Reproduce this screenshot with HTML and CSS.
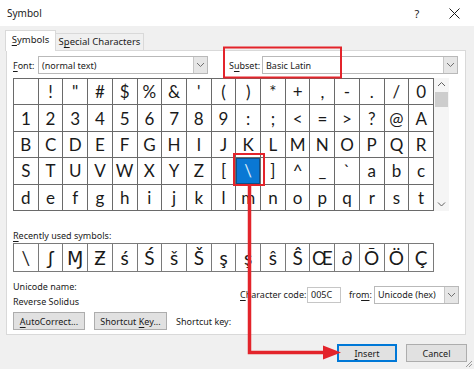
FILE: index.html
```html
<!DOCTYPE html>
<html lang="en">
<head>
    <meta charset="UTF-8">
    <title>Symbol</title>
    <link rel="stylesheet" href="styles.css">
</head>
<body>
    <div class="titlebar">
        <span class="title">Symbol</span>
        <span class="help">?</span>
        <span class="close">
            <svg width="11" height="11" viewBox="0 0 11 11"><path d="M0.5 0.5 L10.5 10.5 M10.5 0.5 L0.5 10.5" stroke="#1a1a1a" stroke-width="1"/></svg>
        </span>
    </div>

    <div class="tabs">
        <div class="tab active"><u>S</u>ymbols</div>
        <div class="tab">S<u>p</u>ecial Characters</div>
    </div>

    <div class="panel">
        <div class="select-row">
            <span class="lbl font-lbl"><u>F</u>ont:</span>
            <div class="combo font-combo">
                <span>(normal text)</span>
                <span class="drop"><svg width="9" height="6" viewBox="0 0 9 6"><path d="M1 1 L4.5 4.5 L8 1" fill="none" stroke="#707070"/></svg></span>
            </div>
            <span class="lbl subset-lbl">S<u>u</u>bset:</span>
            <div class="combo subset-combo">
                <span>Basic Latin</span>
                <span class="drop"><svg width="9" height="6" viewBox="0 0 9 6"><path d="M1 1 L4.5 4.5 L8 1" fill="none" stroke="#707070"/></svg></span>
            </div>
        </div>

        <div class="map-wrap">
            <div class="charmap">
                <span></span><span>!</span><span>&quot;</span><span>#</span><span>$</span><span>%</span><span>&amp;</span><span>'</span><span>(</span><span>)</span><span>*</span><span>+</span><span>,</span><span>-</span><span>.</span><span>/</span><span>0</span>
                <span>1</span><span>2</span><span>3</span><span>4</span><span>5</span><span>6</span><span>7</span><span>8</span><span>9</span><span>:</span><span>;</span><span>&lt;</span><span>=</span><span>&gt;</span><span>?</span><span>@</span><span>A</span>
                <span>B</span><span>C</span><span>D</span><span>E</span><span>F</span><span>G</span><span>H</span><span>I</span><span>J</span><span>K</span><span>L</span><span>M</span><span>N</span><span>O</span><span>P</span><span>Q</span><span>R</span>
                <span>S</span><span>T</span><span>U</span><span>V</span><span>W</span><span>X</span><span>Y</span><span>Z</span><span>[</span><span class="sel">\</span><span>]</span><span>^</span><span>_</span><span>`</span><span>a</span><span>b</span><span>c</span>
                <span>d</span><span>e</span><span>f</span><span>g</span><span>h</span><span>i</span><span>j</span><span>k</span><span>l</span><span>m</span><span>n</span><span>o</span><span>p</span><span>q</span><span>r</span><span>s</span><span>t</span>
            </div>
            <div class="scrollbar">
                <svg width="15" height="14" viewBox="0 0 15 14"><path d="M4 8 L7.5 4.5 L11 8" fill="none" stroke="#606060"/></svg>
                <div class="thumb"></div>
                <svg class="down" width="15" height="14" viewBox="0 0 15 14"><path d="M4 5.5 L7.5 9 L11 5.5" fill="none" stroke="#606060"/></svg>
            </div>
        </div>

        <div class="recent-lbl"><u>R</u>ecently used symbols:</div>
        <div class="recent">
            <span>\</span><span>ʃ</span><span>Ɱ</span><span>Ƶ</span><span>ś</span><span>Ś</span><span>š</span><span>Š</span><span>ş</span><span>ş</span><span>ŝ</span><span>Ŝ</span><span>Œ</span><span>∂</span><span>Ō</span><span>Ö</span><span>Ç</span>
        </div>

        <div class="info-row">
            <div class="names">
                <div>Unicode name:</div>
                <div>Reverse Solidus</div>
            </div>
            <div class="code">
                <span class="code-lbl"><u>C</u>haracter code:</span>
                <span class="code-input">005C</span>
                <span class="from-lbl">fro<u>m</u>:</span>
                <div class="combo from-combo">
                    <span>Unicode (hex)</span>
                    <span class="drop"><svg width="9" height="6" viewBox="0 0 9 6"><path d="M1 1 L4.5 4.5 L8 1" fill="none" stroke="#707070"/></svg></span>
                </div>
            </div>
        </div>

        <div class="btn-row">
            <button class="btn autocorrect"><u>A</u>utoCorrect...</button>
            <button class="btn shortcut">Shortcut <u>K</u>ey...</button>
            <span class="shortcut-lbl">Shortcut key:</span>
        </div>
    </div>

    <div class="footer">
        <button class="btn insert"><u>I</u>nsert</button>
        <button class="btn cancel">Cancel</button>
    </div>

    <!-- red callouts drawn over the dialog -->
    <svg class="callouts" width="474" height="369" viewBox="0 0 474 369">
        <rect x="224" y="47.5" width="117" height="30" fill="none" stroke="#e3242b" stroke-width="2"/>
        <rect x="234" y="154" width="30" height="31" fill="none" stroke="#e3242b" stroke-width="2"/>
        <path d="M249.5 185 L249.5 352.5 L326 352.5" fill="none" stroke="#e3242b" stroke-width="3.5"/>
        <polygon points="323,345.5 341,352.5 323,359.5" fill="#e3242b"/>
    </svg>

    <svg class="grip" width="8" height="8" viewBox="0 0 8 8">
        <path d="M7 1 L1 7 M7 4 L4 7" stroke="#9a9a9a" stroke-width="1"/>
    </svg>
</body>
</html>
```

FILE: styles.css
```css
* {
    box-sizing: border-box;
}

body {
    margin: 0;
    width: 474px;
    height: 369px;
    position: relative;
    overflow: hidden;
    background-color: #f0f0f0;
    font-family: "Noto Sans", "Open Sans", sans-serif;
    font-size: 9px;
    color: #1a1a1a;
    white-space: nowrap;
}

u {
    text-decoration-thickness: 1px;
    text-underline-offset: 2px;
}

.titlebar {
    height: 26px;
    background-color: #fff;
    display: flex;
    align-items: center;
    padding: 0 4px 0 7px;
}

.title {
    flex: 1;
    font-size: 10px;
}

.help,
.close {
    width: 32px;
    display: flex;
    justify-content: center;
    align-items: center;
    font-size: 11px;
}

.help {
    margin-right: 5px;
}

.tabs {
    display: flex;
    align-items: flex-end;
    height: 20px;
    margin: 4px 0 0 5px;
    position: relative;
    z-index: 1;
}

.tab {
    height: 17px;
    width: 88px;
    text-align: center;
    line-height: 16px;
    font-size: 9.5px;
    background-color: #f0f0f0;
    border: 1px solid #d9d9d9;
    border-bottom: none;
}

.tab + .tab {
    border-left: none;
}

.tab.active {
    width: 51px;
    height: 21px;
    margin-bottom: -1px;
    line-height: 18px;
    background-color: #fff;
}

.panel {
    margin: 0 8px 0 6px;
    background-color: #fff;
    border: 1px solid #d9d9d9;
    padding: 5px 6px 4px;
}

.select-row {
    display: flex;
    align-items: center;
    height: 18px;
}

.font-lbl {
    width: 25px;
}

.subset-lbl {
    width: 33px;
    margin-left: 21px;
}

.combo {
    height: 18px;
    display: flex;
    align-items: center;
    padding-left: 3px;
    border: 1px solid #b9b9b9;
    background-color: #fff;
}

.combo .drop {
    margin-left: auto;
    width: 14px;
    height: 16px;
    display: flex;
    align-items: center;
    justify-content: center;
    background-color: #e6e6e6;
    border-left: 1px solid #c6c6c6;
}

.font-combo {
    width: 170px;
}

.subset-combo {
    width: 196px;
}

.map-wrap {
    display: flex;
    margin-top: 4px;
}

.charmap {
    width: 421px;
    height: 133px;
    display: grid;
    grid-template-columns: repeat(17, 1fr);
    grid-template-rows: repeat(5, 1fr);
    border-left: 1px solid #6a6a6a;
    border-top: 1px solid #6a6a6a;
    font-family: Lato, "DejaVu Sans", sans-serif;
    font-size: 17px;
}

.charmap span {
    display: flex;
    align-items: center;
    justify-content: center;
    border-right: 1px solid #6a6a6a;
    border-bottom: 1px solid #6a6a6a;
}

.charmap .sel {
    background-color: #0a78d4;
    color: #dcebf8;
    box-shadow: inset 0 0 0 1px #114f86;
}

.scrollbar {
    width: 15px;
    height: 133px;
    background-color: #f5f5f5;
    display: flex;
    flex-direction: column;
}

.scrollbar .thumb {
    width: 13px;
    height: 15px;
    margin-left: 1px;
    background-color: #cdcdcd;
}

.scrollbar .down {
    margin-top: auto;
}

.recent-lbl {
    margin-top: 18px;
    line-height: 14px;
}

.recent {
    width: 421px;
    height: 29px;
    display: grid;
    grid-template-columns: repeat(17, 1fr);
    border-left: 1px solid #7a7a7a;
    border-top: 1px solid #7a7a7a;
    font-family: Lato, "DejaVu Sans", sans-serif;
    font-size: 19px;
}

.recent span {
    display: flex;
    align-items: center;
    justify-content: center;
    border-right: 1px solid #7a7a7a;
    border-bottom: 1px solid #7a7a7a;
}

.info-row {
    display: flex;
    margin-top: 7px;
}

.names {
    width: 227px;
    line-height: 15px;
}

.code {
    display: flex;
    align-items: center;
    height: 17px;
    margin-top: 7px;
}

.code-lbl {
    width: 67px;
}

.code-input {
    width: 34px;
    height: 16px;
    line-height: 14px;
    padding-left: 3px;
    border: 1px solid #c6c6c6;
}

.from-lbl {
    width: 25px;
    margin-left: 8px;
}

.from-combo {
    width: 85px;
}

.btn-row {
    display: flex;
    align-items: center;
    margin-top: 3px;
}

.btn {
    height: 18px;
    padding: 0;
    font-family: inherit;
    font-size: 9px;
    color: #1a1a1a;
    background-color: #e1e1e1;
    border: 1px solid #adadad;
    white-space: nowrap;
}

.autocorrect {
    width: 72px;
}

.shortcut {
    width: 73px;
    margin-left: 9px;
}

.shortcut-lbl {
    margin-left: 9px;
}

.footer {
    display: flex;
    justify-content: flex-end;
    margin-top: 9px;
    padding-right: 7px;
}

.insert {
    width: 60px;
    border-color: #0078d7;
    box-shadow: inset 0 0 0 1px #0078d7;
}

.cancel {
    width: 61px;
    margin-left: 9px;
}

.callouts {
    position: absolute;
    top: 0;
    left: 0;
    pointer-events: none;
}

.grip {
    position: absolute;
    right: 1px;
    bottom: 1px;
}
```
